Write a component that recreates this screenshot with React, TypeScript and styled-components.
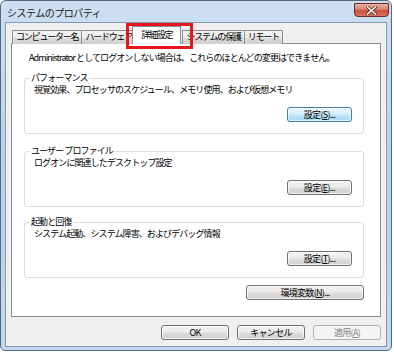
import React from 'react';
import styled, { createGlobalStyle, css } from 'styled-components';

const GlobalStyle = createGlobalStyle`
  html, body { margin: 0; padding: 0; background: #ffffff; }
  body {
    font-family: "Noto Sans CJK JP", "Noto Sans", sans-serif;
    color: #000000;
  }
`;

const Window = styled.div`
  position: relative;
  width: 392px;
  height: 351px;
  box-sizing: border-box;
  border: 1px solid #56677e;
  border-radius: 6px 6px 5px 5px;
  background: linear-gradient(180deg, #cddff3 0%, #bad1ea 45%, #c3d7ee 100%);
  display: flex;
  flex-direction: column;
  padding: 0 4px 3px 4px;
`;

const TitleBar = styled.div`
  height: 21px;
  display: flex;
  align-items: flex-start;
  justify-content: space-between;
  margin-right: -3px;
`;

const Title = styled.div`
  font-size: 10px;
  letter-spacing: -0.5px;
  line-height: 12px;
  margin: 6px 0 0 2px;
  color: #1a1a1a;
`;

const CloseButton = styled.div`
  width: 35px;
  height: 14px;
  margin: 2px 1px 0 0;
  box-sizing: border-box;
  border: 1px solid #6d2a22;
  border-radius: 0 0 4px 4px;
  background: linear-gradient(180deg, #e8b0a4 0%, #d98474 45%, #c9503b 55%, #d9745c 100%);
  display: flex;
  align-items: center;
  justify-content: center;
`;

const Client = styled.div`
  flex: 1;
  box-sizing: border-box;
  border: 1px solid #8699b3;
  background: #f0f0f0;
  padding: 4px 5px 5px 5px;
  display: flex;
  flex-direction: column;
`;

const TabStrip = styled.div`
  display: flex;
  align-items: flex-end;
  height: 17px;
  padding-left: 1px;
  position: relative;
  z-index: 1;
  margin-bottom: -1px;
`;

const Tab = styled.div<{ $active?: boolean }>`
  box-sizing: border-box;
  height: 14px;
  padding: 0 3px;
  font-size: 9px;
  letter-spacing: -1.2px;
  line-height: 12px;
  border: 1px solid #898c95;
  border-bottom: none;
  margin-right: -1px;
  background: linear-gradient(180deg, #f3f3f3 0%, #ebebeb 50%, #dddddd 51%, #cfcfcf 100%);
  white-space: nowrap;
  ${p => p.$active && css`
    height: 18px;
    padding: 2px 8px 0 8px;
    margin: 0 1px 0 -3px;
    background: #ffffff;
    position: relative;
    z-index: 2;
  `}
`;

const Highlight = styled.div`
  position: absolute;
  left: 125px;
  top: 22px;
  width: 67px;
  height: 26px;
  box-sizing: border-box;
  border: 3px solid #e8141e;
  z-index: 5;
`;

const Panel = styled.div`
  height: 274px;
  box-sizing: border-box;
  border: 1px solid #898c95;
  background: #ffffff;
  padding: 8px 16px 0 12px;
  display: flex;
  flex-direction: column;
`;

const Text = styled.div<{ $indent?: number }>`
  font-size: 9px;
  letter-spacing: -0.9px;
  line-height: 12px;
  padding-left: ${p => p.$indent ?? 0}px;
  white-space: nowrap;
`;

const Group = styled.fieldset<{ $gap: number }>`
  margin: ${p => p.$gap}px 0 0 0;
  height: 62px;
  box-sizing: border-box;
  border: 1px solid #d5dfe5;
  border-radius: 3px;
  padding: 0 11px 0 4px;
  display: flex;
  flex-direction: column;
`;

const GroupLabel = styled.legend`
  font-size: 9px;
  letter-spacing: -0.9px;
  line-height: 12px;
  padding: 0 1px;
  margin-left: 1px;
`;

const GroupAction = styled.div`
  display: flex;
  justify-content: flex-end;
  margin-top: 11px;
`;

const Button = styled.div<{ $w: number; $focus?: boolean; $disabled?: boolean }>`
  width: ${p => p.$w}px;
  height: 15px;
  box-sizing: border-box;
  border: 1px solid #707070;
  border-radius: 3px;
  background: linear-gradient(180deg, #f2f2f2 0%, #ebebeb 48%, #dddddd 52%, #cfcfcf 100%);
  box-shadow: inset 0 0 0 1px rgba(255, 255, 255, 0.7);
  font-size: 9px;
  letter-spacing: -0.7px;
  line-height: 13px;
  text-align: center;
  white-space: nowrap;
  ${p => p.$focus && css`
    border-color: #3c7fb1;
    background: linear-gradient(180deg, #eaf6fd 0%, #d9f0fc 48%, #bee6fd 52%, #a7d9f5 100%);
  `}
  ${p => p.$disabled && css`
    border-color: #adb2b5;
    background: #f4f4f4;
    color: #838383;
    box-shadow: none;
  `}
  u { text-decoration: underline; text-underline-offset: 1px; }
`;

const PanelFooter = styled.div`
  display: flex;
  justify-content: flex-end;
  margin: 7px 0 0 0;
`;

const DialogFooter = styled.div`
  display: flex;
  justify-content: flex-end;
  gap: 8px;
  margin-top: 8px;
`;

const groups = [
  { label: 'パフォーマンス', text: '視覚効果、プロセッサのスケジュール、メモリ使用、および仮想メモリ', key: 'S', focus: true, gap: 8 },
  { label: 'ユーザー プロファイル', text: 'ログオンに関連したデスクトップ設定', key: 'E', gap: 11 },
  { label: '起動と回復', text: 'システム起動、システム障害、およびデバッグ情報', key: 'T', gap: 9 },
];

const tabs = ['コンピューター名', 'ハードウェア', '詳細設定', 'システムの保護', 'リモート'];

export default function App() {
  return (
    <>
      <GlobalStyle />
      <Window>
        <TitleBar>
          <Title>システムのプロパティ</Title>
          <CloseButton>
            <svg width="11" height="9" viewBox="0 0 11 9">
              <path d="M1.5 1 L9.5 8 M9.5 1 L1.5 8" stroke="#5a2219" strokeWidth="3" strokeLinecap="square" />
              <path d="M1.5 1 L9.5 8 M9.5 1 L1.5 8" stroke="#ffffff" strokeWidth="1.6" strokeLinecap="square" />
            </svg>
          </CloseButton>
        </TitleBar>
        <Client>
          <TabStrip>
            {tabs.map(t => (
              <Tab key={t} $active={t === '詳細設定'}>{t}</Tab>
            ))}
          </TabStrip>
          <Panel>
            <Text $indent={5}>Administrator としてログオンしない場合は、これらのほとんどの変更はできません。</Text>
            {groups.map(g => (
              <Group key={g.key} $gap={g.gap}>
                <GroupLabel>{g.label}</GroupLabel>
                <Text $indent={5}>{g.text}</Text>
                <GroupAction>
                  <Button $w={65} $focus={g.focus}>設定(<u>{g.key}</u>)...</Button>
                </GroupAction>
              </Group>
            ))}
            <PanelFooter>
              <Button $w={118}>環境変数(<u>N</u>)...</Button>
            </PanelFooter>
          </Panel>
          <DialogFooter>
            <Button $w={68}>OK</Button>
            <Button $w={68}>キャンセル</Button>
            <Button $w={68} $disabled>適用(<u>A</u>)</Button>
          </DialogFooter>
        </Client>
        <Highlight />
      </Window>
    </>
  );
}
